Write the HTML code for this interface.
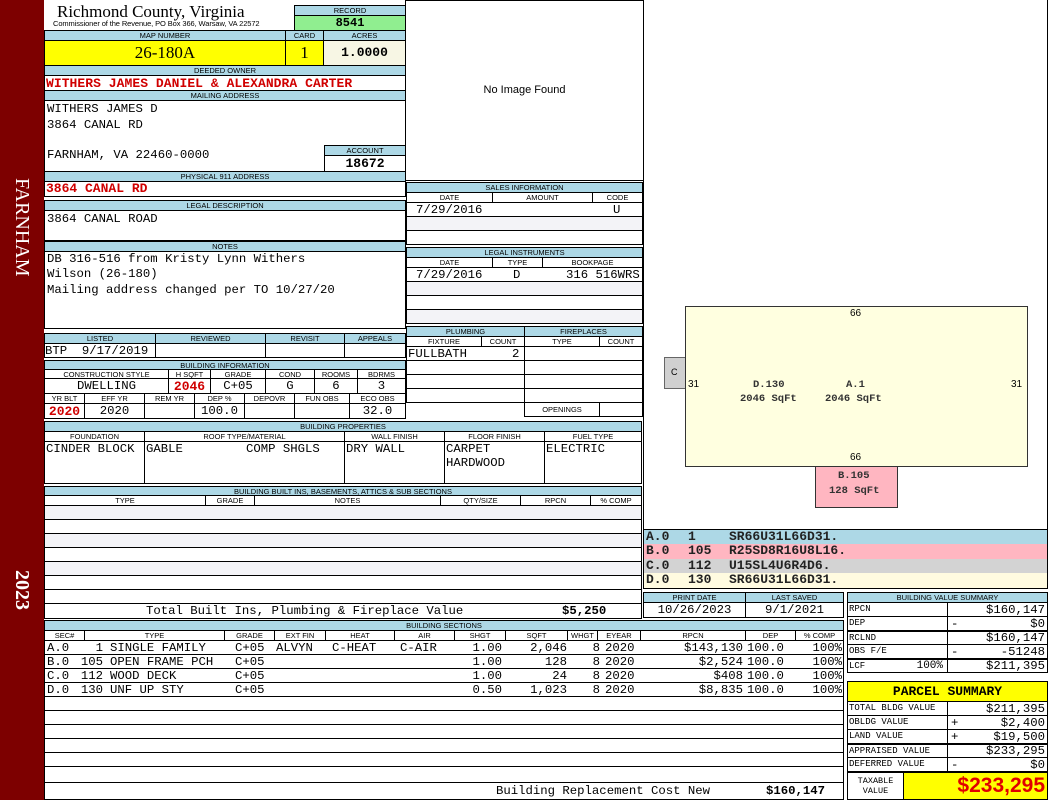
<!DOCTYPE html>
<html><head><meta charset="utf-8"><style>
*{margin:0;padding:0;box-sizing:border-box}
body{width:1050px;height:800px;background:#fff;position:relative;overflow:hidden;font-family:"Liberation Mono",monospace;font-size:12px;color:#000}
.a{position:absolute}
.b{border:1px solid #000}
.h{position:absolute;background:#add8e6;border:1px solid #000;font:7.5px "Liberation Sans",sans-serif;text-align:center;line-height:9px;white-space:nowrap;overflow:hidden}
.c{position:absolute;border:1px solid #000;background:#fff;white-space:pre;overflow:hidden}
.t{position:absolute;white-space:pre;font-family:"Liberation Mono",monospace;font-size:12.3px}
.r{text-align:right}
.red{color:#d00000;font-weight:bold}
.ln{position:absolute;height:1px;background:#000}
.sh{background:#f3f3f7}
.lg{position:absolute;font:bold 13px "Liberation Mono",monospace;color:#222;white-space:pre}
</style></head><body>

<div class="a" style="left:0;top:0;width:44px;height:800px;background:#7d0000"></div>
<div class="a" style="left:10px;top:178px;writing-mode:vertical-rl;color:#fff;font:20px 'Liberation Serif',serif">FARNHAM</div>
<div class="a" style="left:10px;top:570px;writing-mode:vertical-rl;color:#fff;font:bold 20px 'Liberation Serif',serif">2023</div>

<div class="a" style="left:57px;top:2px;font:17px 'Liberation Serif',serif">Richmond County, Virginia</div>
<div class="a" style="left:53px;top:19px;font:7.5px 'Liberation Sans',sans-serif;letter-spacing:-0.1px">Commissioner of the Revenue, PO Box 366, Warsaw, VA 22572</div>
<div class="h" style="left:294px;top:5px;width:112px;height:11px">RECORD</div>
<div class="c" style="left:294px;top:15px;width:112px;height:16px;background:#90ee90;text-align:center;font-weight:bold;font-size:12px;line-height:14px">8541</div>

<div class="h" style="left:44px;top:30px;width:242px;height:11px">MAP NUMBER</div>
<div class="h" style="left:285px;top:30px;width:39px;height:11px">CARD</div>
<div class="h" style="left:323px;top:30px;width:83px;height:11px">ACRES</div>
<div class="c" style="left:44px;top:40px;width:242px;height:26px;background:#ffff00;text-align:center;font:17px 'Liberation Serif',serif;line-height:24px">26-180A</div>
<div class="c" style="left:285px;top:40px;width:39px;height:26px;background:#ffff00;text-align:center;font:17px 'Liberation Serif',serif;line-height:24px">1</div>
<div class="c" style="left:323px;top:40px;width:83px;height:26px;background:#f7f6e4;text-align:center;font-weight:bold;font-size:13px;line-height:24px">1.0000</div>

<div class="h" style="left:44px;top:65px;width:362px;height:11px">DEEDED OWNER</div>
<div class="c" style="left:44px;top:75px;width:362px;height:16px"></div>
<div class="t red" style="left:46px;top:76px;font-size:13px;letter-spacing:0.05px">WITHERS JAMES DANIEL &amp; ALEXANDRA CARTER</div>
<div class="h" style="left:44px;top:90px;width:362px;height:11px">MAILING ADDRESS</div>
<div class="c" style="left:44px;top:100px;width:362px;height:72px"></div>
<div class="t" style="left:47px;top:102px">WITHERS JAMES D</div>
<div class="t" style="left:47px;top:118px">3864 CANAL RD</div>
<div class="t" style="left:47px;top:148px">FARNHAM, VA 22460-0000</div>
<div class="h" style="left:324px;top:145px;width:82px;height:11px">ACCOUNT</div>
<div class="c" style="left:324px;top:155px;width:82px;height:17px;text-align:center;font-weight:bold;font-size:13px;line-height:15px">18672</div>
<div class="h" style="left:44px;top:171px;width:362px;height:11px">PHYSICAL 911 ADDRESS</div>
<div class="c" style="left:44px;top:181px;width:362px;height:16px"></div>
<div class="t red" style="left:46px;top:181px;font-size:13px">3864 CANAL RD</div>

<div class="h" style="left:44px;top:200px;width:362px;height:11px">LEGAL DESCRIPTION</div>
<div class="c" style="left:44px;top:210px;width:362px;height:31px"></div>
<div class="t" style="left:47px;top:212px">3864 CANAL ROAD</div>
<div class="h" style="left:44px;top:241px;width:362px;height:11px">NOTES</div>
<div class="c" style="left:44px;top:251px;width:362px;height:78px"></div>
<div class="t" style="left:47px;top:252px">DB 316-516 from Kristy Lynn Withers</div>
<div class="t" style="left:47px;top:267px">Wilson (26-180)</div>
<div class="t" style="left:47px;top:283px">Mailing address changed per TO 10/27/20</div>

<div class="h" style="left:44px;top:333px;width:112px;height:11px">LISTED</div>
<div class="h" style="left:155px;top:333px;width:111px;height:11px">REVIEWED</div>
<div class="h" style="left:265px;top:333px;width:80px;height:11px">REVISIT</div>
<div class="h" style="left:344px;top:333px;width:62px;height:11px">APPEALS</div>
<div class="c" style="left:44px;top:343px;width:112px;height:15px"></div>
<div class="c" style="left:155px;top:343px;width:111px;height:15px"></div>
<div class="c" style="left:265px;top:343px;width:80px;height:15px"></div>
<div class="c" style="left:344px;top:343px;width:62px;height:15px"></div>
<div class="t" style="left:45px;top:344px">BTP  9/17/2019</div>

<div class="h" style="left:44px;top:360px;width:362px;height:10px">BUILDING INFORMATION</div>
<div class="c" style="left:44px;top:369px;width:362px;height:50px"></div>
<div class="h" style="left:44px;top:369px;width:125px;height:10px;background:#fff">CONSTRUCTION STYLE</div>
<div class="h" style="left:168px;top:369px;width:43px;height:10px;background:#fff">H SQFT</div>
<div class="h" style="left:210px;top:369px;width:56px;height:10px;background:#fff">GRADE</div>
<div class="h" style="left:265px;top:369px;width:50px;height:10px;background:#fff">COND</div>
<div class="h" style="left:314px;top:369px;width:44px;height:10px;background:#fff">ROOMS</div>
<div class="h" style="left:357px;top:369px;width:49px;height:10px;background:#fff">BDRMS</div>
<div class="c" style="left:44px;top:378px;width:125px;height:16px;text-align:center;font-size:12.3px">DWELLING</div>
<div class="c red" style="left:168px;top:378px;width:43px;height:16px;text-align:center;font-size:13px">2046</div>
<div class="c" style="left:210px;top:378px;width:56px;height:16px;text-align:center;font-size:12.3px">C+05</div>
<div class="c" style="left:265px;top:378px;width:50px;height:16px;text-align:center;font-size:12.3px">G</div>
<div class="c" style="left:314px;top:378px;width:44px;height:16px;text-align:center;font-size:12.3px">6</div>
<div class="c" style="left:357px;top:378px;width:49px;height:16px;text-align:center;font-size:12.3px">3</div>
<div class="h" style="left:44px;top:393px;width:41px;height:11px;background:#fff">YR BLT</div>
<div class="h" style="left:84px;top:393px;width:61px;height:11px;background:#fff">EFF YR</div>
<div class="h" style="left:144px;top:393px;width:51px;height:11px;background:#fff">REM YR</div>
<div class="h" style="left:194px;top:393px;width:51px;height:11px;background:#fff">DEP %</div>
<div class="h" style="left:244px;top:393px;width:51px;height:11px;background:#fff">DEPOVR</div>
<div class="h" style="left:294px;top:393px;width:56px;height:11px;background:#fff">FUN OBS</div>
<div class="h" style="left:349px;top:393px;width:57px;height:11px;background:#fff">ECO OBS</div>
<div class="c red" style="left:44px;top:403px;width:41px;height:16px;text-align:center;font-size:13px">2020</div>
<div class="c" style="left:84px;top:403px;width:61px;height:16px;text-align:center;font-size:12.3px">2020</div>
<div class="c" style="left:144px;top:403px;width:51px;height:16px"></div>
<div class="c" style="left:194px;top:403px;width:51px;height:16px;text-align:center;font-size:12.3px">100.0</div>
<div class="c" style="left:244px;top:403px;width:51px;height:16px"></div>
<div class="c" style="left:294px;top:403px;width:56px;height:16px"></div>
<div class="c" style="left:349px;top:403px;width:57px;height:16px;text-align:center;font-size:12.3px">32.0</div>

<div class="h" style="left:44px;top:421px;width:598px;height:11px">BUILDING PROPERTIES</div>
<div class="h" style="left:44px;top:431px;width:101px;height:11px;background:#fff">FOUNDATION</div>
<div class="h" style="left:144px;top:431px;width:201px;height:11px;background:#fff">ROOF TYPE/MATERIAL</div>
<div class="h" style="left:344px;top:431px;width:101px;height:11px;background:#fff">WALL FINISH</div>
<div class="h" style="left:444px;top:431px;width:101px;height:11px;background:#fff">FLOOR FINISH</div>
<div class="h" style="left:544px;top:431px;width:98px;height:11px;background:#fff">FUEL TYPE</div>
<div class="c" style="left:44px;top:441px;width:101px;height:43px"></div>
<div class="c" style="left:144px;top:441px;width:201px;height:43px"></div>
<div class="c" style="left:344px;top:441px;width:101px;height:43px"></div>
<div class="c" style="left:444px;top:441px;width:101px;height:43px"></div>
<div class="c" style="left:544px;top:441px;width:98px;height:43px"></div>
<div class="t" style="left:46px;top:442px">CINDER BLOCK</div>
<div class="t" style="left:146px;top:442px">GABLE</div>
<div class="t" style="left:246px;top:442px">COMP SHGLS</div>
<div class="t" style="left:346px;top:442px">DRY WALL</div>
<div class="t" style="left:446px;top:442px">CARPET</div>
<div class="t" style="left:446px;top:456px">HARDWOOD</div>
<div class="t" style="left:546px;top:442px">ELECTRIC</div>

<div class="h" style="left:44px;top:486px;width:598px;height:10px">BUILDING BUILT INS, BASEMENTS, ATTICS &amp; SUB SECTIONS</div>
<div class="h" style="left:44px;top:495px;width:162px;height:11px;background:#fff">TYPE</div>
<div class="h" style="left:205px;top:495px;width:50px;height:11px;background:#fff">GRADE</div>
<div class="h" style="left:254px;top:495px;width:187px;height:11px;background:#fff">NOTES</div>
<div class="h" style="left:440px;top:495px;width:81px;height:11px;background:#fff">QTY/SIZE</div>
<div class="h" style="left:520px;top:495px;width:71px;height:11px;background:#fff">RPCN</div>
<div class="h" style="left:590px;top:495px;width:52px;height:11px;background:#fff">% COMP</div>
<div class="c sh" style="left:44px;top:505px;width:598px;height:15px"></div>
<div class="c" style="left:44px;top:519px;width:598px;height:15px"></div>
<div class="c sh" style="left:44px;top:533px;width:598px;height:15px"></div>
<div class="c" style="left:44px;top:547px;width:598px;height:15px"></div>
<div class="c sh" style="left:44px;top:561px;width:598px;height:15px"></div>
<div class="c" style="left:44px;top:575px;width:598px;height:15px"></div>
<div class="c" style="left:44px;top:589px;width:598px;height:15px"></div>
<div class="c" style="left:44px;top:603px;width:598px;height:16px"></div>
<div class="t" style="left:146px;top:604px">Total Built Ins, Plumbing &amp; Fireplace Value</div>
<div class="t" style="left:562px;top:604px;font-weight:bold">$5,250</div>

<div class="c" style="left:405px;top:0;width:239px;height:181px;font:11px 'Liberation Sans',sans-serif;text-align:center;line-height:178px">No Image Found</div>
<div class="h" style="left:406px;top:182px;width:237px;height:11px">SALES INFORMATION</div>
<div class="h" style="left:406px;top:192px;width:87px;height:11px;background:#fff">DATE</div>
<div class="h" style="left:492px;top:192px;width:101px;height:11px;background:#fff">AMOUNT</div>
<div class="h" style="left:592px;top:192px;width:51px;height:11px;background:#fff">CODE</div>
<div class="c" style="left:406px;top:202px;width:237px;height:15px"></div>
<div class="c sh" style="left:406px;top:216px;width:237px;height:15px"></div>
<div class="c" style="left:406px;top:230px;width:237px;height:15px"></div>
<div class="t" style="left:416px;top:203px">7/29/2016</div>
<div class="t" style="left:613px;top:203px">U</div>

<div class="h" style="left:406px;top:247px;width:237px;height:11px">LEGAL INSTRUMENTS</div>
<div class="h" style="left:406px;top:257px;width:87px;height:11px;background:#fff">DATE</div>
<div class="h" style="left:492px;top:257px;width:51px;height:11px;background:#fff">TYPE</div>
<div class="h" style="left:542px;top:257px;width:101px;height:11px;background:#fff">BOOKPAGE</div>
<div class="c" style="left:406px;top:267px;width:237px;height:15px"></div>
<div class="c sh" style="left:406px;top:281px;width:237px;height:15px"></div>
<div class="c" style="left:406px;top:295px;width:237px;height:15px"></div>
<div class="c sh" style="left:406px;top:309px;width:237px;height:15px"></div>
<div class="t" style="left:416px;top:268px">7/29/2016</div>
<div class="t" style="left:513px;top:268px">D</div>
<div class="t" style="left:566px;top:268px">316 516WRS</div>

<div class="h" style="left:406px;top:326px;width:119px;height:11px">PLUMBING</div>
<div class="h" style="left:524px;top:326px;width:119px;height:11px">FIREPLACES</div>
<div class="h" style="left:406px;top:336px;width:76px;height:11px;background:#fff">FIXTURE</div>
<div class="h" style="left:481px;top:336px;width:44px;height:11px;background:#fff">COUNT</div>
<div class="h" style="left:524px;top:336px;width:76px;height:11px;background:#fff">TYPE</div>
<div class="h" style="left:599px;top:336px;width:44px;height:11px;background:#fff">COUNT</div>
<div class="c" style="left:406px;top:346px;width:119px;height:15px"></div>
<div class="c" style="left:406px;top:360px;width:119px;height:15px"></div>
<div class="c" style="left:406px;top:374px;width:119px;height:15px"></div>
<div class="c" style="left:406px;top:388px;width:119px;height:15px"></div>
<div class="c" style="left:524px;top:346px;width:119px;height:15px"></div>
<div class="c" style="left:524px;top:360px;width:119px;height:15px"></div>
<div class="c" style="left:524px;top:374px;width:119px;height:15px"></div>
<div class="c" style="left:524px;top:388px;width:119px;height:15px"></div>
<div class="t" style="left:408px;top:347px">FULLBATH</div>
<div class="t" style="left:512px;top:347px">2</div>
<div class="h" style="left:524px;top:402px;width:76px;height:15px;background:#fff;line-height:13px">OPENINGS</div>
<div class="c" style="left:599px;top:402px;width:44px;height:15px"></div>

<div class="a" style="left:643px;top:0;width:1px;height:530px;background:#000"></div>
<div class="a" style="left:1047px;top:0;width:1px;height:530px;background:#000"></div>
<div class="a" style="left:664px;top:357px;width:22px;height:32px;background:#d0d0d0;border:1px solid #666"></div>
<div class="a" style="left:671px;top:367px;font:9px 'Liberation Sans',sans-serif">C</div>
<div class="a" style="left:685px;top:306px;width:343px;height:161px;background:#ffffe0;border:1px solid #333"></div>
<div class="a" style="left:815px;top:466px;width:83px;height:42px;background:#ffb6c1;border:1px solid #333"></div>
<div class="a" style="left:850px;top:308px;font:10px 'Liberation Sans',sans-serif">66</div>
<div class="a" style="left:850px;top:452px;font:10px 'Liberation Sans',sans-serif">66</div>
<div class="a" style="left:688px;top:379px;font:10px 'Liberation Sans',sans-serif">31</div>
<div class="a" style="left:1011px;top:379px;font:10px 'Liberation Sans',sans-serif">31</div>
<div class="t" style="left:753px;top:379px;font-size:10.5px;font-weight:bold;color:#333">D.130</div>
<div class="t" style="left:740px;top:393px;font-size:10.5px;font-weight:bold;color:#333">2046 SqFt</div>
<div class="t" style="left:846px;top:379px;font-size:10.5px;font-weight:bold;color:#333">A.1</div>
<div class="t" style="left:825px;top:393px;font-size:10.5px;font-weight:bold;color:#333">2046 SqFt</div>
<div class="t" style="left:838px;top:470px;font-size:10.5px;font-weight:bold;color:#333">B.105</div>
<div class="t" style="left:829px;top:485px;font-size:10.5px;font-weight:bold;color:#333">128 SqFt</div>

<div class="a b" style="left:643px;top:529px;width:405px;height:60px"></div>
<div class="a" style="left:644px;top:530px;width:403px;height:14px;background:#add8e6"></div>
<div class="a" style="left:644px;top:544px;width:403px;height:15px;background:#ffb6c1"></div>
<div class="a" style="left:644px;top:559px;width:403px;height:14px;background:#d3d3d3"></div>
<div class="a" style="left:644px;top:573px;width:403px;height:15px;background:#fffbe0"></div>
<div class="lg" style="left:646px;top:529px">A.0</div><div class="lg" style="left:688px;top:529px">1</div><div class="lg" style="left:729px;top:529px">SR66U31L66D31.</div>
<div class="lg" style="left:646px;top:543px">B.0</div><div class="lg" style="left:688px;top:543px">105</div><div class="lg" style="left:729px;top:543px">R25SD8R16U8L16.</div>
<div class="lg" style="left:646px;top:558px">C.0</div><div class="lg" style="left:688px;top:558px">112</div><div class="lg" style="left:729px;top:558px">U15SL4U6R4D6.</div>
<div class="lg" style="left:646px;top:572px">D.0</div><div class="lg" style="left:688px;top:572px">130</div><div class="lg" style="left:729px;top:572px">SR66U31L66D31.</div>

<div class="h" style="left:643px;top:592px;width:103px;height:11px">PRINT DATE</div>
<div class="h" style="left:745px;top:592px;width:99px;height:11px">LAST SAVED</div>
<div class="c" style="left:643px;top:602px;width:103px;height:16px;text-align:center;font-size:12.3px">10/26/2023</div>
<div class="c" style="left:745px;top:602px;width:99px;height:16px;text-align:center;font-size:12.3px">9/1/2021</div>

<div class="h" style="left:44px;top:620px;width:800px;height:11px">BUILDING SECTIONS</div>
<div class="c" style="left:44px;top:630px;width:800px;height:170px"></div>
<div class="h" style="left:44px;top:630px;width:41px;height:11px;background:#fff">SEC#</div>
<div class="h" style="left:84px;top:630px;width:141px;height:11px;background:#fff">TYPE</div>
<div class="h" style="left:224px;top:630px;width:51px;height:11px;background:#fff">GRADE</div>
<div class="h" style="left:274px;top:630px;width:52px;height:11px;background:#fff">EXT FIN</div>
<div class="h" style="left:325px;top:630px;width:70px;height:11px;background:#fff">HEAT</div>
<div class="h" style="left:394px;top:630px;width:61px;height:11px;background:#fff">AIR</div>
<div class="h" style="left:454px;top:630px;width:52px;height:11px;background:#fff">SHGT</div>
<div class="h" style="left:505px;top:630px;width:63px;height:11px;background:#fff">SQFT</div>
<div class="h" style="left:567px;top:630px;width:31px;height:11px;background:#fff">WHGT</div>
<div class="h" style="left:597px;top:630px;width:44px;height:11px;background:#fff">EYEAR</div>
<div class="h" style="left:640px;top:630px;width:106px;height:11px;background:#fff">RPCN</div>
<div class="h" style="left:745px;top:630px;width:51px;height:11px;background:#fff">DEP</div>
<div class="h" style="left:795px;top:630px;width:49px;height:11px;background:#fff">% COMP</div>
<div class="ln" style="left:44px;top:654px;width:800px"></div>
<div class="ln" style="left:44px;top:668px;width:800px"></div>
<div class="ln" style="left:44px;top:682px;width:800px"></div>
<div class="ln" style="left:44px;top:696px;width:800px"></div>
<div class="ln" style="left:44px;top:710px;width:800px"></div>
<div class="ln" style="left:44px;top:724px;width:800px"></div>
<div class="ln" style="left:44px;top:738px;width:800px"></div>
<div class="ln" style="left:44px;top:752px;width:800px"></div>
<div class="ln" style="left:44px;top:766px;width:800px"></div>
<div class="ln" style="left:44px;top:782px;width:800px"></div>
<div class="t" style="left:47px;top:641px;line-height:14px">A.0<br>B.0<br>C.0<br>D.0</div>
<div class="t r" style="left:70px;top:641px;width:33px;line-height:14px">1<br>105<br>112<br>130</div>
<div class="t" style="left:110px;top:641px;line-height:14px">SINGLE FAMILY<br>OPEN FRAME PCH<br>WOOD DECK<br>UNF UP STY</div>
<div class="t" style="left:235px;top:641px;line-height:14px">C+05<br>C+05<br>C+05<br>C+05</div>
<div class="t" style="left:276px;top:641px">ALVYN</div>
<div class="t" style="left:332px;top:641px">C-HEAT</div>
<div class="t" style="left:400px;top:641px">C-AIR</div>
<div class="t r" style="left:455px;top:641px;width:47px;line-height:14px">1.00<br>1.00<br>1.00<br>0.50</div>
<div class="t r" style="left:505px;top:641px;width:62px;line-height:14px">2,046<br>128<br>24<br>1,023</div>
<div class="t r" style="left:570px;top:641px;width:30px;line-height:14px">8<br>8<br>8<br>8</div>
<div class="t" style="left:605px;top:641px;line-height:14px">2020<br>2020<br>2020<br>2020</div>
<div class="t r" style="left:640px;top:641px;width:103px;line-height:14px">$143,130<br>$2,524<br>$408<br>$8,835</div>
<div class="t" style="left:747px;top:641px;line-height:14px">100.0<br>100.0<br>100.0<br>100.0</div>
<div class="t r" style="left:795px;top:641px;width:47px;line-height:14px">100%<br>100%<br>100%<br>100%</div>
<div class="t" style="left:496px;top:784px">Building Replacement Cost New</div>
<div class="t" style="left:766px;top:784px;font-weight:bold">$160,147</div>

<div class="h" style="left:847px;top:592px;width:201px;height:11px">BUILDING VALUE SUMMARY</div>
<div class="c" style="left:847px;top:602px;width:101px;height:15px;font-size:9px;line-height:13px;padding-left:1px">RPCN</div>
<div class="c r" style="left:947px;top:602px;width:101px;height:15px;padding-right:2px;font-size:12.3px">$160,147</div>
<div class="c" style="left:847px;top:616px;width:101px;height:15px;font-size:9px;line-height:13px;padding-left:1px">DEP</div>
<div class="c r" style="left:947px;top:616px;width:101px;height:15px;padding-right:2px;font-size:12.3px"><span style="float:left;padding-left:3px">-</span>$0</div>
<div class="c" style="left:847px;top:630px;width:101px;height:15px;font-size:9px;line-height:13px;padding-left:1px;border-top-width:2px">RCLND</div>
<div class="c r" style="left:947px;top:630px;width:101px;height:15px;padding-right:2px;border-top-width:2px;font-size:12.3px;line-height:12px">$160,147</div>
<div class="c" style="left:847px;top:644px;width:101px;height:15px;font-size:9px;line-height:13px;padding-left:1px">OBS F/E</div>
<div class="c r" style="left:947px;top:644px;width:101px;height:15px;padding-right:2px;font-size:12.3px"><span style="float:left;padding-left:3px">-</span>-51248</div>
<div class="c" style="left:847px;top:658px;width:101px;height:15px;font-size:9px;line-height:13px;padding-left:1px;border-top-width:2px">LCF<span style="position:absolute;right:4px;font-size:11px">100%</span></div>
<div class="c r" style="left:947px;top:658px;width:101px;height:15px;padding-right:2px;border-top-width:2px;font-size:12.3px;line-height:12px">$211,395</div>

<div class="c" style="left:847px;top:681px;width:201px;height:21px;background:#ffff00;text-align:center;font:bold 13px 'Liberation Mono',monospace;line-height:19px">PARCEL SUMMARY</div>
<div class="c" style="left:847px;top:701px;width:101px;height:15px;font-size:9px;line-height:13px;padding-left:1px">TOTAL BLDG VALUE</div>
<div class="c r" style="left:947px;top:701px;width:101px;height:15px;padding-right:2px;font-size:12.3px">$211,395</div>
<div class="c" style="left:847px;top:715px;width:101px;height:15px;font-size:9px;line-height:13px;padding-left:1px">OBLDG VALUE</div>
<div class="c r" style="left:947px;top:715px;width:101px;height:15px;padding-right:2px;font-size:12.3px"><span style="float:left;padding-left:3px">+</span>$2,400</div>
<div class="c" style="left:847px;top:729px;width:101px;height:15px;font-size:9px;line-height:13px;padding-left:1px">LAND VALUE</div>
<div class="c r" style="left:947px;top:729px;width:101px;height:15px;padding-right:2px;font-size:12.3px"><span style="float:left;padding-left:3px">+</span>$19,500</div>
<div class="c" style="left:847px;top:743px;width:101px;height:15px;font-size:9px;line-height:13px;padding-left:1px;border-top-width:2px">APPRAISED VALUE</div>
<div class="c r" style="left:947px;top:743px;width:101px;height:15px;padding-right:2px;border-top-width:2px;font-size:12.3px;line-height:12px">$233,295</div>
<div class="c" style="left:847px;top:757px;width:101px;height:15px;font-size:9px;line-height:13px;padding-left:1px">DEFERRED VALUE</div>
<div class="c r" style="left:947px;top:757px;width:101px;height:15px;padding-right:2px;font-size:12.3px"><span style="float:left;padding-left:3px">-</span>$0</div>
<div class="c" style="left:847px;top:771px;width:57px;height:29px;font-size:8.5px;line-height:10px;text-align:center;padding-top:3px;border-top-width:2px">TAXABLE
VALUE</div>
<div class="c" style="left:903px;top:771px;width:145px;height:29px;background:#ffff00;text-align:right;color:#e00000;font:bold 21px 'Liberation Sans',sans-serif;line-height:26px;padding-right:2px;border-top-width:2px">$233,295</div>

</body></html>
